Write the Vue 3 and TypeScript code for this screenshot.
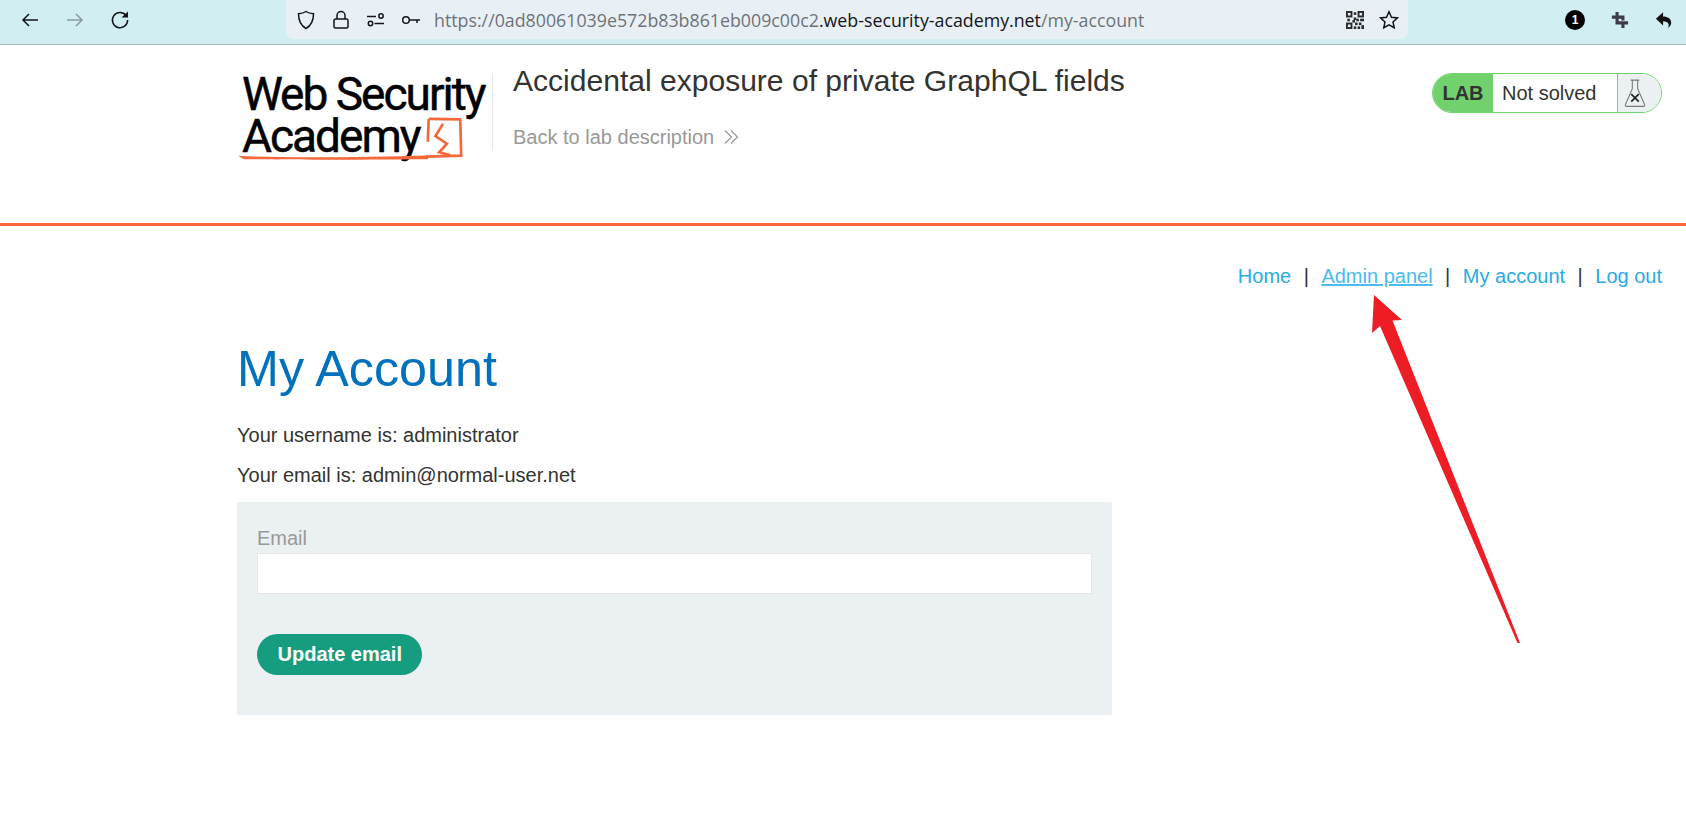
<script setup lang="ts">
const navLinks = [
  { label: "Home", active: false },
  { label: "Admin panel", active: true },
  { label: "My account", active: false },
  { label: "Log out", active: false },
];

// on/off cells of the little QR button in the address bar
const qrCells = [
  [0, 0, 5, 5], [9, 0, 5, 5], [0, 9, 5, 5], [6, 1, 2, 2], [6, 5, 2, 2], [1, 6, 2, 2],
  [5, 7, 2, 2], [8, 6, 2, 2], [11, 6, 3, 2], [7, 9, 2, 2], [10, 9, 2, 2], [6, 12, 2, 2],
  [9, 12, 2, 2], [12, 11, 2, 3],
];
</script>

<template>
  <div class="page">
    <div class="toolbar">
      <div class="nav-buttons">
        <svg class="ico" viewBox="0 0 20 20"><path d="M18 10H3M9 4l-6 6 6 6" /></svg>
        <svg class="ico faded" viewBox="0 0 20 20"><path d="M2 10h15M11 4l6 6-6 6" /></svg>
        <svg class="ico" viewBox="0 0 20 20">
          <path d="M16 5.500A7.600 7.600 0 1 0 17.600 10" />
          <path class="solid" d="M11.500 7.500 18 1.500v6z" />
        </svg>
      </div>
      <div class="url-bar">
        <svg class="ico small" viewBox="0 0 20 20"><path d="M10 1.500c2 1.400 4.500 2 7.500 2.200 0 6.800-1.800 11.500-7.500 14.800C4.300 15.200 2.500 10.500 2.500 3.700 5.500 3.500 8 2.900 10 1.500z" /></svg>
        <svg class="ico small" viewBox="0 0 20 20"><path d="M4.500 9h11a1.500 1.500 0 0 1 1.500 1.500v6a1.500 1.500 0 0 1-1.500 1.500h-11A1.500 1.500 0 0 1 3 16.500v-6A1.500 1.500 0 0 1 4.500 9zM6 9V5.500a4 4 0 0 1 8 0V9" /></svg>
        <svg class="ico small" viewBox="0 0 20 20"><path d="M1 6.500h9M8.500 13.500H18" /><circle cx="15" cy="6" r="2.200" /><circle cx="4.500" cy="13.500" r="2.200" /></svg>
        <svg class="ico small" viewBox="0 0 20 20"><circle cx="5" cy="10" r="3.300" /><path d="M8.500 10H19M16 10v3" /></svg>
        <div class="url-text">https://0ad80061039e572b83b861eb009c00c2<span>.web-security-academy.net</span>/my-account</div>
        <svg class="qr" viewBox="0 0 14 14">
          <rect v-for="(c, i) in qrCells" :key="i" :x="c[0]" :y="c[1]" :width="c[2]" :height="c[3]" />
          <rect class="qr-hole" x="1.500" y="1.500" width="2" height="2" />
          <rect class="qr-hole" x="10.500" y="1.500" width="2" height="2" />
          <rect class="qr-hole" x="1.500" y="10.500" width="2" height="2" />
        </svg>
        <svg class="ico small star" viewBox="0 0 20 20"><path d="M10 1.800l2.500 5.400 5.900.7-4.400 4 1.200 5.800-5.200-2.900-5.200 2.900 1.200-5.800-4.400-4 5.900-.7z" /></svg>
      </div>
      <div class="ext-buttons">
        <span class="badge">1</span>
        <svg class="ext" viewBox="0 0 20 20"><path d="M5 1h3.500v10.500H19V15h-4v4h-3.500v-4H5V8.500H1V5h4zM8.500 5H15v5.500h-3.500v-2h-3z" /></svg>
        <svg class="ext dark" viewBox="0 0 20 20"><path d="M9 1.500V6c5.200 0 9 2.500 9 7 0 2.500-1.500 4.500-4 6 1.200-1.500 1.500-3 1-4.500-.6-2-3-3-6-3v4.500L1 8.500z" /></svg>
      </div>
    </div>

    <header class="academy-header">
      <div class="logo">
        <div class="logo-line">Web Security</div>
        <div class="logo-line">Academy</div>
        <svg class="logo-mark" viewBox="0 0 40 44">
          <path d="M4 2l33 .5 1 38-37 1" />
          <path d="M4 2 3 26" />
          <path d="M19 7 11 20l12 8-8 9 12 3" />
        </svg>
        <svg class="logo-under" viewBox="0 0 190 6" preserveAspectRatio="none"><path d="M0 1C50 4 130 2.500 190 .5V5C130 5.500 50 6 6 5z" /></svg>
      </div>
      <div class="lab-title">
        <h2>Accidental exposure of private GraphQL fields</h2>
        <a class="back-link">Back to lab description
          <svg viewBox="0 0 16 16"><path d="M1 1.500 7.500 8 1 14.500M7 1.500 13.500 8 7 14.500" /></svg>
        </a>
      </div>
      <div class="lab-status">
        <span class="lab-tag">LAB</span>
        <span class="lab-state">Not solved</span>
        <span class="lab-flask">
          <svg viewBox="0 0 22 28">
            <path d="M7 2h8M8.500 2v8L2 25a1 1 0 0 0 1 1.500h16a1 1 0 0 0 1-1.500L13.500 10V2" />
            <path class="x" d="M7.500 15l7 7M14.500 15l-7 7" />
          </svg>
        </span>
      </div>
    </header>

    <main class="content">
      <nav class="top-links">
        <template v-for="(link, i) in navLinks" :key="link.label">
          <span v-if="i > 0" class="sep">|</span>
          <a :class="{ active: link.active }">{{ link.label }}</a>
        </template>
      </nav>

      <h1>My Account</h1>
      <p>Your username is: administrator</p>
      <p>Your email is: admin@normal-user.net</p>

      <form class="email-form" @submit.prevent>
        <label for="email">Email</label>
        <input id="email" type="email" />
        <button type="submit">Update email</button>
      </form>
    </main>

    <svg class="annotation" viewBox="0 0 1686 832">
      <polygon points="1374,295 1402,320 1392.500,320.500 1520,643 1517.500,643 1380,326 1372,333" />
    </svg>
  </div>
</template>

<style scoped>
.page {
  position: relative;
  height: 832px;
  overflow: hidden;
  background: #fff;
  color: #333332;
  font-family: "Liberation Sans", Arial, sans-serif;
}

.toolbar {
  display: flex;
  align-items: flex-start;
  height: 44px;
  border-bottom: 1px solid #a3b9bd;
  background: #d1eff3;
}

.nav-buttons {
  display: flex;
  gap: 25px;
  width: 286px;
  padding: 10px 0 0 20px;
  box-sizing: border-box;
}

.ico {
  width: 20px;
  height: 20px;
  flex: none;
  fill: none;
  stroke: #15141a;
  stroke-width: 1.500;
}

.ico.faded {
  stroke: #8a9a9f;
}

.ico .solid {
  fill: #15141a;
  stroke: none;
}

.url-bar {
  display: flex;
  align-items: center;
  width: 1122px;
  height: 39px;
  padding: 0 0 0 10px;
  box-sizing: border-box;
  border-radius: 0 0 8px 8px;
  background: #e8f0f6;
}

.ico.small {
  margin-right: 15px;
}

.url-text {
  flex: 1;
  margin-left: -2px;
  color: #6f7378;
  font-family: "Open Sans", sans-serif;
  font-size: 17.800px;
  white-space: nowrap;
}

.url-text span {
  color: #15141a;
}

.qr {
  width: 18px;
  height: 18px;
  margin-right: 15px;
  fill: #2a2a2e;
}

.qr .qr-hole {
  fill: #e8f0f6;
}

.ico.small.star {
  margin-right: 9px;
}

.ext-buttons {
  display: flex;
  align-items: center;
  gap: 26px;
  height: 39px;
  margin-left: 157px;
}

.badge {
  display: flex;
  align-items: center;
  justify-content: center;
  width: 20px;
  height: 20px;
  border-radius: 50%;
  background: #000;
  color: #fff;
  font-size: 12px;
  font-weight: 700;
}

.ext {
  width: 18px;
  height: 18px;
  fill: #3c3c48;
}

.ext.dark {
  fill: #111;
}

.academy-header {
  display: flex;
  height: 178px;
  padding-left: 238px;
  padding-right: 24px;
  border-bottom: 3px solid #ff6633;
}

.logo {
  position: relative;
  width: 254px;
  height: 88px;
  margin-top: 28px;
  padding-left: 4px;
  box-sizing: border-box;
  color: #000;
  font-family: Roboto, sans-serif;
  font-size: 46px;
  font-weight: 400;
  letter-spacing: -2px;
  line-height: 42px;
  -webkit-text-stroke: 0.500px #000;
}

.logo-line {
  white-space: nowrap;
}

.logo-mark {
  position: absolute;
  left: 186px;
  top: 44px;
  width: 40px;
  height: 42px;
  fill: none;
  stroke: #f4683a;
  stroke-width: 2.800;
}

.logo-under {
  position: absolute;
  left: 0;
  top: 82px;
  width: 190px;
  height: 5px;
  fill: #f4683a;
}

.lab-title {
  flex: 1;
  height: 78px;
  margin-top: 28px;
  padding-left: 20px;
  border-left: 1px solid #e6e8ea;
}

.lab-title h2 {
  margin: -11px 0 0;
  color: #333332;
  font-size: 30.050px;
  font-weight: 400;
  line-height: 38px;
}

.back-link {
  display: flex;
  align-items: center;
  gap: 10px;
  margin-top: 25px;
  color: #999;
  font-size: 20px;
  line-height: 24px;
}

.back-link svg {
  width: 16px;
  height: 16px;
  fill: none;
  stroke: #999;
  stroke-width: 1.200;
}

.lab-status {
  display: flex;
  align-self: flex-start;
  width: 230px;
  height: 40px;
  margin-top: 28px;
  box-sizing: border-box;
  border: 1px solid #70d16d;
  border-radius: 20px;
  overflow: hidden;
  font-size: 20px;
}

.lab-tag {
  display: flex;
  align-items: center;
  justify-content: center;
  width: 60px;
  background: #70d16d;
  color: #333332;
  font-weight: 700;
}

.lab-state {
  display: flex;
  flex: 1;
  align-items: center;
  padding-left: 9px;
  color: #333332;
}

.lab-flask {
  display: flex;
  align-items: center;
  justify-content: center;
  width: 44px;
  padding-right: 9px;
  box-sizing: border-box;
  border-left: 1px solid #70d16d;
  background: #ebf0f2;
}

.lab-flask svg {
  width: 24px;
  height: 30px;
  fill: none;
  stroke: #777;
  stroke-width: 1;
}

.lab-flask .x {
  stroke: #222;
  stroke-width: 1.500;
}

.content {
  padding: 0 24px 0 237px;
}

.top-links {
  display: flex;
  justify-content: flex-end;
  gap: 12.500px;
  margin-top: 38px;
  color: #29abe2;
  font-size: 20px;
  line-height: 24px;
}

.top-links .sep {
  color: #333332;
}

.top-links .active {
  color: #4dbbee;
  text-decoration: underline;
}

h1 {
  margin: 50px 0 0;
  color: #0071bc;
  font-size: 50.300px;
  font-weight: 400;
  line-height: 62px;
}

p {
  margin: 23px 0 0;
  color: #333332;
  font-size: 20px;
  line-height: 24px;
}

p + p {
  margin-top: 16px;
}

.email-form {
  display: flex;
  flex-direction: column;
  align-items: flex-start;
  width: 875px;
  height: 213px;
  margin-top: 15px;
  padding: 22px 20px 0;
  box-sizing: border-box;
  background: #ebf0f2;
}

.email-form label {
  color: #999;
  font-size: 20px;
  line-height: 29px;
}

.email-form input {
  width: 100%;
  height: 41px;
  box-sizing: border-box;
  border: 1px solid #e6e6e6;
  background: #fff;
  outline: none;
}

.email-form button {
  height: 41px;
  margin-top: 40px;
  padding: 0 20.500px;
  border: none;
  border-radius: 25px;
  background: #169c7e;
  color: #fff;
  font-family: inherit;
  font-size: 20px;
  font-weight: 700;
}

.annotation {
  position: absolute;
  inset: 0;
  width: 1686px;
  height: 832px;
  fill: #ee1c25;
  pointer-events: none;
}
</style>
